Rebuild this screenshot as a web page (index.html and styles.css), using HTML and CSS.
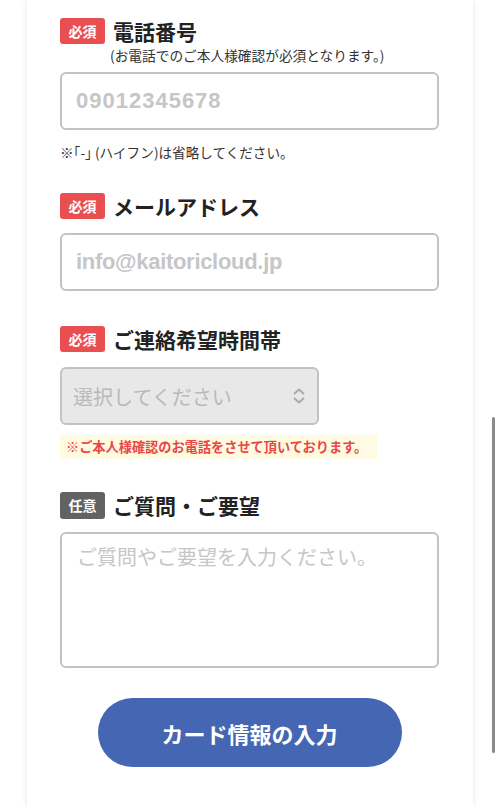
FILE: index.html
```html
<!DOCTYPE html>
<html lang="ja">

<head>
    <meta charset="UTF-8">
    <meta name="viewport" content="width=device-width, initial-scale=1.0">
    <title>お申し込みフォーム</title>
    <link rel="stylesheet" href="styles.css">
</head>

<body>
    <div class="card">
        <div class="field field-tel">
            <div class="label">
                <span class="badge">必須</span>
                <span class="title">電話番号</span>
            </div>
            <p class="sub">(お電話でのご本人様確認が必須となります。)</p>
            <input class="input input-tel" type="tel" placeholder="09012345678">
            <p class="note">※｢-｣ (ハイフン)は省略してください。</p>
        </div>
        <div class="field field-mail">
            <div class="label">
                <span class="badge">必須</span>
                <span class="title">メールアドレス</span>
            </div>
            <input class="input input-mail" type="email" placeholder="info@kaitoricloud.jp">
        </div>
        <div class="field field-time">
            <div class="label">
                <span class="badge">必須</span>
                <span class="title">ご連絡希望時間帯</span>
            </div>
            <div class="select-wrap">
                <select class="select">
                    <option>選択してください</option>
                    <option>10:00〜12:00</option>
                    <option>12:00〜15:00</option>
                    <option>15:00〜18:00</option>
                </select>
                <svg class="arrows" width="14" height="16" viewBox="0 0 14 16">
                    <path d="M2 6 L7 1.5 L12 6 M2 10 L7 14.5 L12 10" fill="none" stroke="#a8a8a8" stroke-width="1.8" />
                </svg>
            </div>
            <p class="notice">※ご本人様確認のお電話をさせて頂いております。</p>
        </div>
        <div class="field field-msg">
            <div class="label">
                <span class="badge badge-opt">任意</span>
                <span class="title">ご質問・ご要望</span>
            </div>
            <textarea class="textarea" placeholder="ご質問やご要望を入力ください。"></textarea>
        </div>
        <div class="actions">
            <button class="submit" type="button">カード情報の入力</button>
        </div>
    </div>
    <div class="scrollbar"></div>
</body>

</html>
```

FILE: styles.css
```css
body {
    margin: 0;
    background: #fff;
    font-family: "Noto Sans CJK JP", "Liberation Sans", sans-serif;
    color: #222;
}

p {
    margin: 0;
}

.card {
    margin: 0 27px;
    min-height: 807px;
    box-sizing: border-box;
    padding: 18px 34px 40px 33px;
    background: #fff;
    box-shadow: 0 0 6px rgba(0, 0, 0, 0.1);
}

.field {
    margin-bottom: 33px;
}

.field-tel {
    margin-bottom: 31px;
}

.field-mail {
    margin-bottom: 35px;
}

.field-msg {
    margin-bottom: 30px;
}

.label {
    display: flex;
    align-items: center;
    gap: 8px;
    height: 26px;
}

.badge {
    display: flex;
    align-items: center;
    justify-content: center;
    width: 45px;
    height: 26px;
    border-radius: 3px;
    background: #e94f50;
    color: #fff;
    font-size: 14px;
    font-weight: 700;
}

.badge-opt {
    background: #626262;
    height: 27px;
}

.title {
    font-size: 21px;
    font-weight: 700;
    line-height: 26px;
    color: #222;
}

.sub {
    margin: 3px 0 0 50px;
    font-size: 13.7px;
    line-height: 16px;
    color: #333;
}

.input,
.select,
.textarea {
    display: block;
    width: 379px;
    box-sizing: border-box;
    border: 2px solid #c2c2c2;
    border-radius: 6px;
    background: #fff;
    outline: none;
}

.input {
    margin-top: 9px;
    height: 58px;
    padding: 0 14px;
    font-family: "Liberation Sans", Arial, sans-serif;
    font-size: 22px;
    font-weight: 700;
    color: #333;
}

.input-tel {
    letter-spacing: 1px;
}

.input-mail {
    margin-top: 14px;
    letter-spacing: -0.3px;
}

.input::placeholder {
    color: #c6c6c6;
}

.note {
    margin-top: 12px;
    font-size: 13.6px;
    line-height: 20px;
    color: #333;
}

.select-wrap {
    position: relative;
    width: 259px;
    margin-top: 15px;
}

.select {
    width: 259px;
    height: 58px;
    padding: 0 11px;
    appearance: none;
    -webkit-appearance: none;
    background: #e8e8e8;
    font-family: "Noto Sans CJK JP", sans-serif;
    font-size: 20px;
    color: #b9b9b9;
}

.arrows {
    position: absolute;
    right: 13px;
    top: 21px;
}

.notice {
    display: inline-block;
    margin-top: 10px;
    padding: 0 10px 0 6px;
    background: #fffbe3;
    color: #e94646;
    font-size: 13.2px;
    font-weight: 700;
    line-height: 24px;
}

.textarea {
    margin-top: 14px;
    height: 136px;
    padding: 8px 15px;
    resize: none;
    font-family: "Noto Sans CJK JP", sans-serif;
    font-size: 20px;
    line-height: 30px;
    color: #333;
}

.textarea::placeholder {
    color: #c6c6c6;
}

.actions {
    display: flex;
    justify-content: center;
}

.submit {
    width: 304px;
    height: 69px;
    border: none;
    border-radius: 35px;
    background: #4466b3;
    color: #fff;
    font-family: "Noto Sans CJK JP", sans-serif;
    font-size: 22px;
    font-weight: 700;
}

.scrollbar {
    position: fixed;
    top: 417px;
    right: 5px;
    width: 3px;
    height: 336px;
    border-radius: 2px;
    background: #8a8a8a;
}
```
